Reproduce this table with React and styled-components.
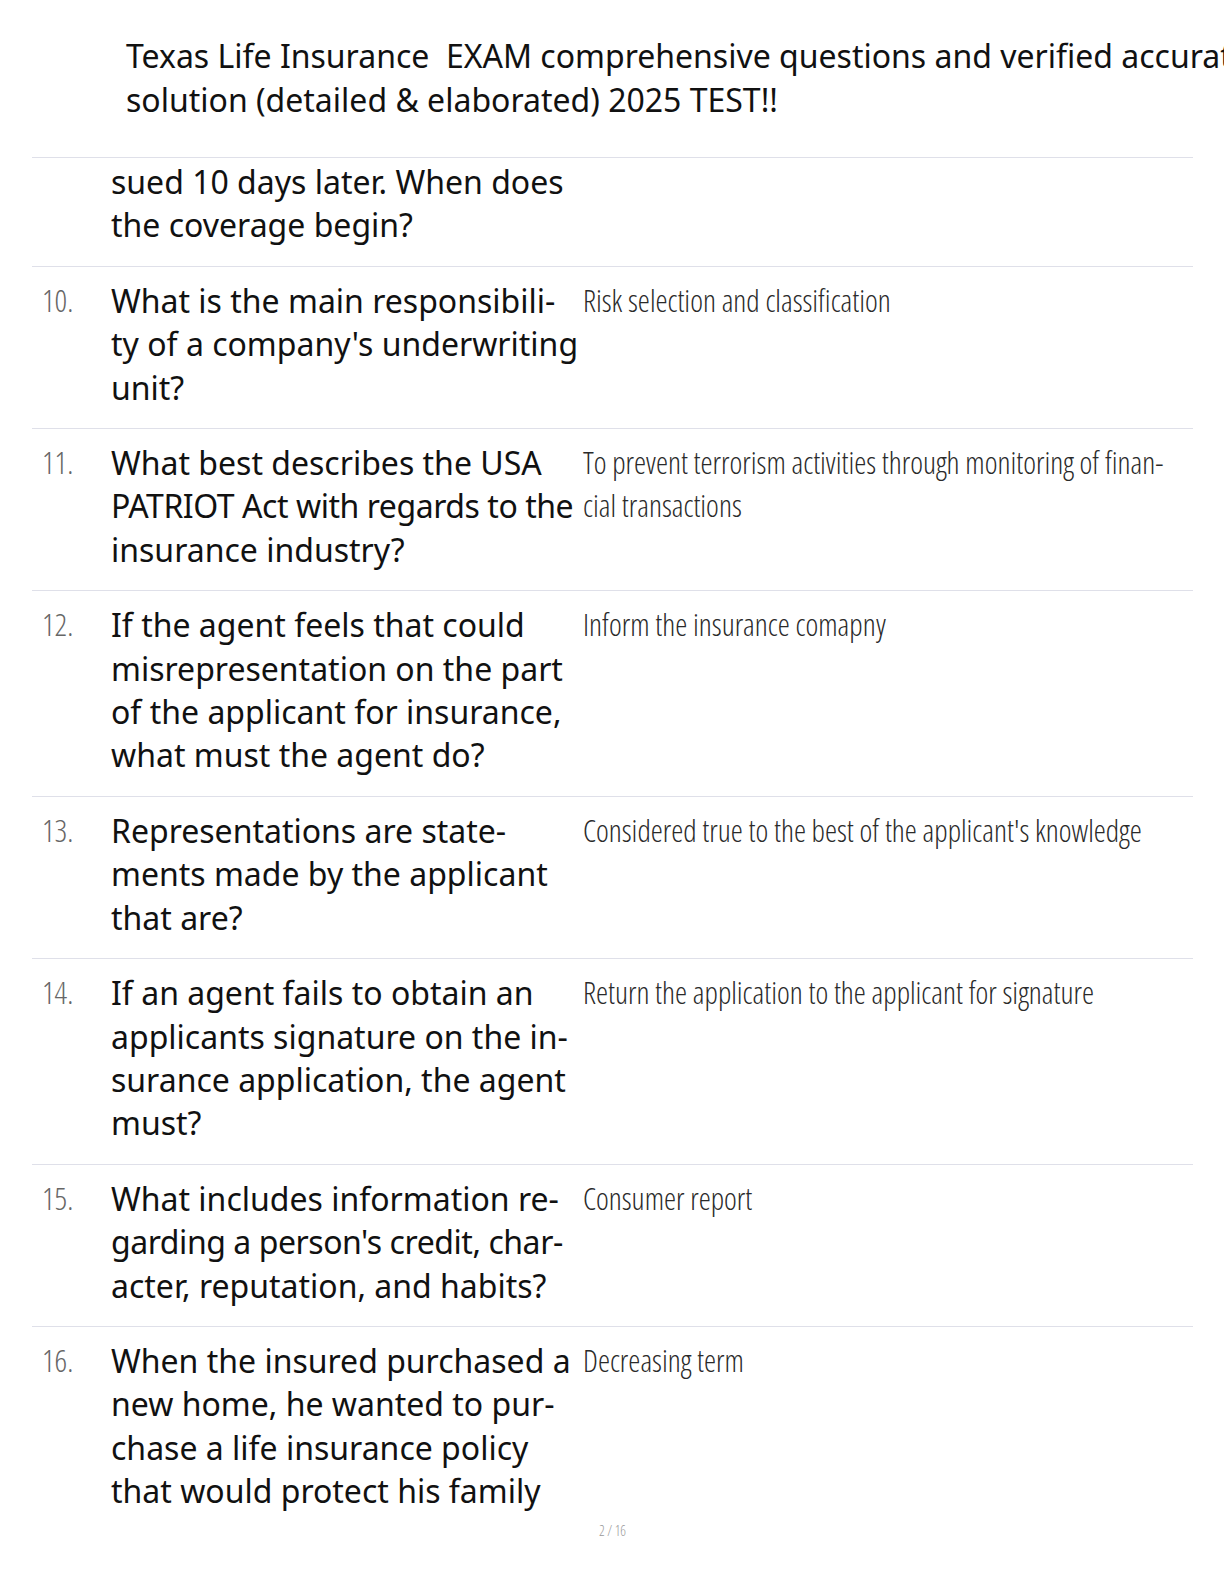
import React from "react";
import styled, { createGlobalStyle } from "styled-components";

const GlobalStyle = createGlobalStyle`
  html, body {
    margin: 0;
    padding: 0;
    background: #fff;
    overflow: hidden;
  }
  body {
    font-family: "Noto Sans", "Open Sans", sans-serif;
    color: #111;
  }
`;

export const Page = styled.div`
  width: 1224px;
  height: 1584px;
  box-sizing: border-box;
  padding: 34px 31px 0 32px;
`;

export const Title = styled.h1`
  margin: 0 0 36px;
  padding-left: 94px;
  font-size: 32px;
  font-weight: 400;
  line-height: 43.5px;
  white-space: nowrap;
  color: #111;
`;

export const QaTable = styled.div`
  border-top: 1px solid #dfe0e9;
`;

export const Row = styled.div`
  display: grid;
  grid-template-columns: 79px 472px 1fr;
  padding: ${({ $first }) => ($first ? "2px" : "12px")} 0
    ${({ $last }) => ($last ? "0" : "19px")};
  border-bottom: ${({ $last }) => ($last ? "none" : "1px solid #dfe0e9")};
`;

export const Num = styled.div`
  padding-left: 10px;
  font-family: "Open Sans", "Noto Sans", sans-serif;
  font-stretch: 75%;
  font-weight: 300;
  font-size: 31px;
  line-height: 43.4px;
  color: #666;
`;

export const Question = styled.div`
  font-size: 32px;
  line-height: 43.4px;
  color: #111;
`;

export const Answer = styled.div`
  font-family: "Open Sans", "Noto Sans", sans-serif;
  font-stretch: 75%;
  font-weight: 300;
  font-size: 30.5px;
  line-height: 43.4px;
  color: #2a2a2a;
`;

export const Line = styled.span`
  display: block;
  white-space: nowrap;
  letter-spacing: ${({ $tight }) => ($tight ? "-0.45px" : "normal")};
`;

export const Footer = styled.div`
  margin-top: 8px;
  text-align: center;
  font-family: "Open Sans", "Noto Sans", sans-serif;
  font-stretch: 75%;
  font-weight: 300;
  font-size: 14px;
  line-height: 20px;
  color: #999;
`;

const rows = [
  {
    num: "",
    q: ["sued 10 days later. When does", "the coverage begin?"],
    a: [],
  },
  {
    num: "10.",
    q: ["What is the main responsibili-", "ty of a company's underwriting", "unit?"],
    a: ["Risk selection and classification"],
  },
  {
    num: "11.",
    q: ["What best describes the USA", "PATRIOT Act with regards to the", "insurance industry?"],
    tight: [1],
    a: ["To prevent terrorism activities through monitoring of finan-", "cial transactions"],
  },
  {
    num: "12.",
    q: [
      "If the agent feels that could",
      "misrepresentation on the part",
      "of the applicant for insurance,",
      "what must the agent do?",
    ],
    a: ["Inform the insurance comapny"],
  },
  {
    num: "13.",
    q: ["Representations are state-", "ments made by the applicant", "that are?"],
    a: ["Considered true to the best of the applicant's knowledge"],
  },
  {
    num: "14.",
    q: [
      "If an agent fails to obtain an",
      "applicants signature on the in-",
      "surance application, the agent",
      "must?",
    ],
    a: ["Return the application to the applicant for signature"],
  },
  {
    num: "15.",
    q: ["What includes information re-", "garding a person's credit, char-", "acter, reputation, and habits?"],
    tight: [1],
    a: ["Consumer report"],
  },
  {
    num: "16.",
    q: [
      "When the insured purchased a",
      "new home, he wanted to pur-",
      "chase a life insurance policy",
      "that would protect his family",
    ],
    a: ["Decreasing term"],
  },
];

export default function App() {
  return (
    <>
      <GlobalStyle />
      <Page>
        <Title>
          <Line>Texas Life Insurance&nbsp; EXAM comprehensive questions and verified accurate</Line>
          <Line>solution (detailed &amp; elaborated) 2025 TEST!!</Line>
        </Title>
        <QaTable>
          {rows.map((r, i) => (
            <Row key={i} $first={i === 0} $last={i === rows.length - 1}>
              <Num>{r.num}</Num>
              <Question>
                {r.q.map((l, j) => (
                  <Line key={j} $tight={r.tight && r.tight.includes(j)}>
                    {l}
                  </Line>
                ))}
              </Question>
              <Answer>
                {r.a.map((l, j) => (
                  <Line key={j}>{l}</Line>
                ))}
              </Answer>
            </Row>
          ))}
        </QaTable>
        <Footer>2 / 16</Footer>
      </Page>
    </>
  );
}
